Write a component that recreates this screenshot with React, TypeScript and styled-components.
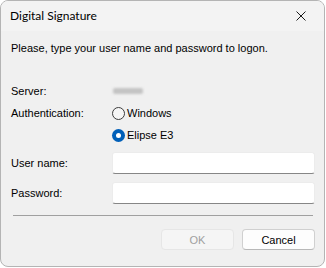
import * as React from "react"
import styled, { createGlobalStyle } from "styled-components"

const GlobalStyle = createGlobalStyle`
  html, body {
    margin: 0;
    padding: 0;
    background: #ffffff;
  }
  body {
    font-family: "Liberation Sans", Arial, sans-serif;
    font-size: 11px;
    color: #000000;
  }
`

const Window = styled.div`
  box-sizing: border-box;
  width: 325px;
  height: 267px;
  display: flex;
  flex-direction: column;
  border: 1px solid #b4b4b4;
  border-radius: 8px;
  background: #f0f0f0;
  overflow: hidden;
`

const TitleBar = styled.div`
  height: 30px;
  flex: none;
  display: flex;
  align-items: center;
  justify-content: space-between;
  padding: 0 9px 0 9px;
  background: #f3f3f3;
`

const Title = styled.span`
  font-family: "Segoe UI", "Lato", sans-serif;
  font-size: 12px;
  line-height: 16px;
  margin-top: -1px;
`

const CloseButton = styled.span`
  display: flex;
  width: 10px;
  height: 10px;
  margin-right: 9px;
  margin-top: -1px;
`

const Content = styled.div`
  display: flex;
  flex-direction: column;
  padding: 9px 9px 0 10px;
`

const Prompt = styled.div`
  line-height: 16px;
`

const Row = styled.div<{ $h: number; $mt: number }>`
  display: grid;
  grid-template-columns: 101px 1fr;
  align-items: center;
  height: ${(p) => p.$h}px;
  margin-top: ${(p) => p.$mt}px;
`

const Label = styled.span`
  line-height: 16px;
`

const Blurred = styled.span`
  display: block;
  width: 30px;
  height: 6px;
  margin-left: 1px;
  background: #c4c4c4;
  border-radius: 2px;
  filter: blur(0.8px);
`

const RadioLabel = styled.label`
  display: flex;
  align-items: center;
  gap: 2px;
  line-height: 16px;
`

const RadioDot = styled.span<{ $checked?: boolean }>`
  box-sizing: border-box;
  width: 13px;
  height: 13px;
  border-radius: 50%;
  display: flex;
  align-items: center;
  justify-content: center;
  border: ${(p) => (p.$checked ? "none" : "1px solid #3c3c3c")};
  background: ${(p) => (p.$checked ? "#005fb8" : "#f6f6f6")};
  &::after {
    content: "";
    display: ${(p) => (p.$checked ? "block" : "none")};
    width: 5px;
    height: 5px;
    border-radius: 50%;
    background: #ffffff;
  }
`

const Input = styled.div`
  box-sizing: border-box;
  height: 22px;
  background: #ffffff;
  border: 1px solid #ececec;
  border-bottom: 1px solid #868686;
  border-radius: 3px;
`

const Separator = styled.div`
  height: 1px;
  background: #a0a0a0;
  margin: 11px 2px 0 2px;
`

const Buttons = styled.div`
  display: flex;
  justify-content: flex-end;
  gap: 8px;
  margin-top: 13px;
`

const Button = styled.div<{ $disabled?: boolean }>`
  box-sizing: border-box;
  width: 73px;
  height: 21px;
  display: flex;
  align-items: center;
  justify-content: center;
  border-radius: 4px;
  line-height: 16px;
  background: ${(p) => (p.$disabled ? "#f5f5f5" : "#fdfdfd")};
  color: ${(p) => (p.$disabled ? "#a0a0a0" : "#000000")};
  border: 1px solid ${(p) => (p.$disabled ? "#e6e6e6" : "#d0d0d0")};
  border-bottom-color: ${(p) => (p.$disabled ? "#e6e6e6" : "#b8b8b8")};
`

const CloseIcon = () => (
  <svg width="10" height="10" viewBox="0 0 10 10">
    <path d="M0.5 0.5 L9.5 9.5 M9.5 0.5 L0.5 9.5" stroke="#1a1a1a" strokeWidth="1" fill="none" />
  </svg>
)

const App = () => {
  return (
    <>
      <GlobalStyle />
      <Window>
        <TitleBar>
          <Title>Digital Signature</Title>
          <CloseButton>
            <CloseIcon />
          </CloseButton>
        </TitleBar>
        <Content>
          <Prompt>Please, type your user name and password to logon.</Prompt>
          <Row $h={20} $mt={25}>
            <Label>Server:</Label>
            <Blurred />
          </Row>
          <Row $h={22} $mt={1}>
            <Label>Authentication:</Label>
            <RadioLabel>
              <RadioDot />
              Windows
            </RadioLabel>
          </Row>
          <Row $h={22} $mt={0}>
            <span />
            <RadioLabel>
              <RadioDot $checked />
              Elipse E3
            </RadioLabel>
          </Row>
          <Row $h={22} $mt={6}>
            <Label>User name:</Label>
            <Input />
          </Row>
          <Row $h={22} $mt={8}>
            <Label>Password:</Label>
            <Input />
          </Row>
          <Separator />
          <Buttons>
            <Button $disabled>OK</Button>
            <Button>Cancel</Button>
          </Buttons>
        </Content>
      </Window>
    </>
  )
}

export default App
